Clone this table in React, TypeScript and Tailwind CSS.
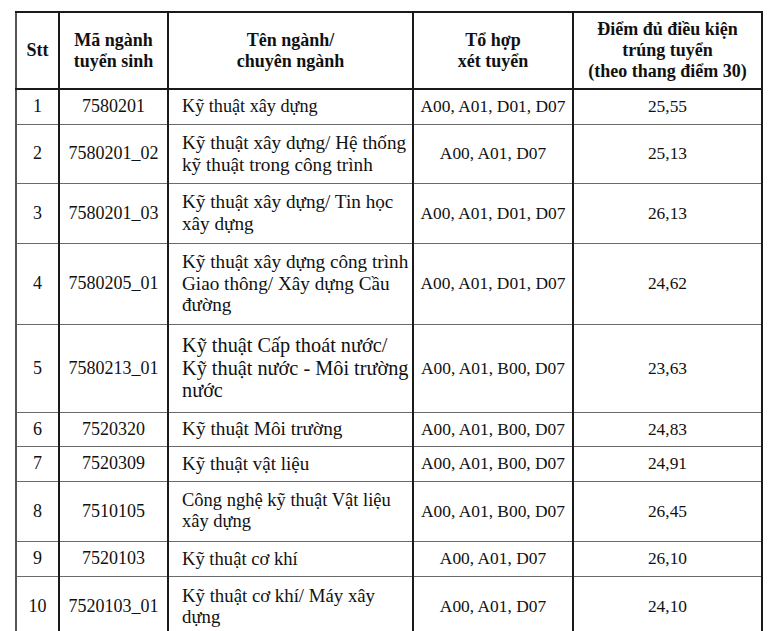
import React from "react";

interface Row {
  stt: string;
  code: string;
  name: string[];
  combo: string;
  score: string;
  h: string;
  nameSize: string;
}

const rows: Row[] = [
  { stt: "1", code: "7580201", name: ["Kỹ thuật xây dựng"], combo: "A00, A01, D01, D07", score: "25,55", h: "h-[35px]", nameSize: "text-[18.2px]" },
  { stt: "2", code: "7580201_02", name: ["Kỹ thuật xây dựng/ Hệ thống", "kỹ thuật trong công trình"], combo: "A00, A01, D07", score: "25,13", h: "h-[59px]", nameSize: "text-[19.2px]" },
  { stt: "3", code: "7580201_03", name: ["Kỹ thuật xây dựng/ Tin học", "xây dựng"], combo: "A00, A01, D01, D07", score: "26,13", h: "h-[60px]", nameSize: "text-[19.2px]" },
  { stt: "4", code: "7580205_01", name: ["Kỹ thuật xây dựng công trình", "Giao thông/ Xây dựng Cầu", "đường"], combo: "A00, A01, D01, D07", score: "24,62", h: "h-[81px]", nameSize: "text-[19.2px]" },
  { stt: "5", code: "7580213_01", name: ["Kỹ thuật Cấp thoát nước/", "Kỹ thuật nước - Môi trường", "nước"], combo: "A00, A01, B00, D07", score: "23,63", h: "h-[88px]", nameSize: "text-[20.3px]" },
  { stt: "6", code: "7520320", name: ["Kỹ thuật Môi trường"], combo: "A00, A01, B00, D07", score: "24,83", h: "h-[34px]", nameSize: "text-[19.3px]" },
  { stt: "7", code: "7520309", name: ["Kỹ thuật vật liệu"], combo: "A00, A01, B00, D07", score: "24,91", h: "h-[35px]", nameSize: "text-[19px]" },
  { stt: "8", code: "7510105", name: ["Công nghệ kỹ thuật Vật liệu", "xây dựng"], combo: "A00, A01, B00, D07", score: "26,45", h: "h-[60px]", nameSize: "text-[18.5px]" },
  { stt: "9", code: "7520103", name: ["Kỹ thuật cơ khí"], combo: "A00, A01, D07", score: "26,10", h: "h-[35px]", nameSize: "text-[18.6px]" },
  { stt: "10", code: "7520103_01", name: ["Kỹ thuật cơ khí/ Máy xây", "dựng"], combo: "A00, A01, D07", score: "24,10", h: "h-[60px]", nameSize: "text-[18.8px]" },
];

const cell = "border-x-2 border-x-[#1a1a1a] border-b border-b-[#6b6b6b] border-b-dotted align-middle";

export default function App() {
  return (
    <div
      className="w-[776px] h-[631px] overflow-hidden bg-white text-[#111] pt-[11px] pl-[15px]"
      style={{ fontFamily: '"Liberation Serif", "Times New Roman", serif' }}
    >
      <table className="table-fixed border-collapse w-[746px] text-[18px] leading-[21px]">
        <colgroup>
          <col className="w-[43px]" />
          <col className="w-[109px]" />
          <col className="w-[245px]" />
          <col className="w-[160px]" />
          <col className="w-[189px]" />
        </colgroup>
        <thead>
          <tr className="h-[77px] font-bold text-center">
            <th className="border-2 border-[#1a1a1a] border-l-[#555] align-middle">Stt</th>
            <th className="border-2 border-[#1a1a1a] align-middle">
              Mã ngành
              <br />
              tuyển sinh
            </th>
            <th className="border-2 border-[#1a1a1a] align-middle">
              Tên ngành/
              <br />
              chuyên ngành
            </th>
            <th className="border-2 border-[#1a1a1a] align-middle">
              Tổ hợp
              <br />
              xét tuyển
            </th>
            <th className="border-2 border-[#1a1a1a] align-middle">
              Điểm đủ điều kiện
              <br />
              trúng tuyển
              <br />
              (theo thang điểm 30)
            </th>
          </tr>
        </thead>
        <tbody>
          {rows.map((r) => (
            <tr key={r.stt} className={r.h}>
              <td className={`${cell} border-l-[#555] text-center`}>{r.stt}</td>
              <td className={`${cell} text-center`}>{r.code}</td>
              <td className={`${cell} pl-[13px] pr-1 leading-[1.13] ${r.nameSize}`}>
                {r.name.map((line, i) => (
                  <div key={i} className="whitespace-nowrap">
                    {line}
                  </div>
                ))}
              </td>
              <td className={`${cell} text-center text-[17.4px] whitespace-nowrap`}>{r.combo}</td>
              <td className={`${cell} text-center text-[17.4px]`}>{r.score}</td>
            </tr>
          ))}
        </tbody>
      </table>
    </div>
  );
}
